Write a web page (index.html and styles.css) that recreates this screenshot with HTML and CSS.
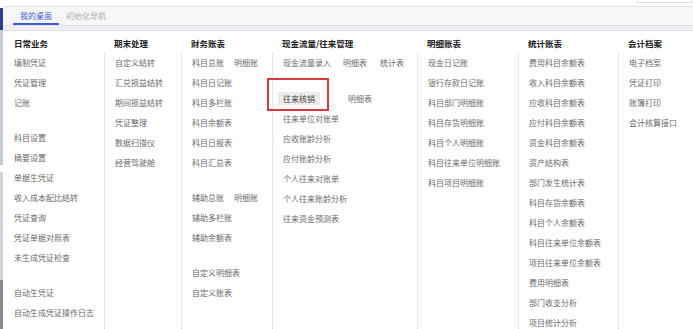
FILE: index.html
```html
<!DOCTYPE html>
<html lang="zh-CN">
<head>
    <meta charset="UTF-8">
    <meta name="viewport" content="width=device-width, initial-scale=1.0">
    <title>我的桌面</title>
    <link rel="stylesheet" href="styles.css">
</head>
<body>
    <div class="page">
        <div class="side-strip"></div>
        <div class="main">
            <div class="topline"><span class="top-box"></span></div>
            <div class="tabs">
                <a class="tab active">我的桌面</a>
                <a class="tab">初始化导航</a>
            </div>
            <div class="tabs-shadow"></div>

            <div class="menu">
                <div class="col col-daily">
                    <h3>日常业务</h3>
                    <div class="col-body">
                        <ul class="group">
                            <li>填制凭证</li>
                            <li>凭证管理</li>
                            <li>记账</li>
                        </ul>
                        <ul class="group">
                            <li>科目设置</li>
                            <li>摘要设置</li>
                            <li>单据生凭证</li>
                            <li>收入成本配比结转</li>
                            <li>凭证查询</li>
                            <li>凭证单据对照表</li>
                            <li>未生成凭证检查</li>
                        </ul>
                        <ul class="group">
                            <li>自动生凭证</li>
                            <li>自动生成凭证操作日志</li>
                        </ul>
                    </div>
                </div>

                <div class="col col-period">
                    <h3>期末处理</h3>
                    <div class="col-body">
                        <ul class="group">
                            <li>自定义结转</li>
                            <li>汇兑损益结转</li>
                            <li>期间损益结转</li>
                            <li>凭证整理</li>
                            <li>数据扫描仪</li>
                            <li>经营驾驶舱</li>
                        </ul>
                    </div>
                </div>

                <div class="col col-books">
                    <h3>财务账表</h3>
                    <div class="col-body">
                        <ul class="group">
                            <li class="pair"><span>科目总账</span><span>明细账</span></li>
                            <li>科目日记账</li>
                            <li>科目多栏账</li>
                            <li>科目余额表</li>
                            <li>科目日报表</li>
                            <li>科目汇总表</li>
                        </ul>
                        <ul class="group">
                            <li class="pair"><span>辅助总账</span><span>明细账</span></li>
                            <li>辅助多栏账</li>
                            <li>辅助余额表</li>
                        </ul>
                        <ul class="group">
                            <li>自定义明细表</li>
                            <li>自定义账表</li>
                        </ul>
                    </div>
                </div>

                <div class="col col-cash">
                    <h3>现金流量/往来管理</h3>
                    <div class="col-body">
                        <ul class="group">
                            <li class="triple"><span>现金流量录入</span><span>明细表</span><span>统计表</span></li>
                        </ul>
                        <ul class="group">
                            <li class="pair-wide"><span class="hl">往来核销</span><span>明细表</span></li>
                            <li>往来单位对账单</li>
                            <li>应收账龄分析</li>
                            <li>应付账龄分析</li>
                            <li>个人往来对账单</li>
                            <li>个人往来账龄分析</li>
                            <li>往来资金预测表</li>
                        </ul>
                        <div class="mark-box"></div>
                    </div>
                </div>

                <div class="col col-detail">
                    <h3>明细账表</h3>
                    <div class="col-body">
                        <ul class="group">
                            <li>现金日记账</li>
                            <li>银行存款日记账</li>
                            <li>科目部门明细账</li>
                            <li>科目存货明细账</li>
                            <li>科目个人明细账</li>
                            <li>科目往来单位明细账</li>
                            <li>科目项目明细账</li>
                        </ul>
                    </div>
                </div>

                <div class="col col-stats">
                    <h3>统计账表</h3>
                    <div class="col-body">
                        <ul class="group">
                            <li>费用科目余额表</li>
                            <li>收入科目余额表</li>
                            <li>应收科目余额表</li>
                            <li>应付科目余额表</li>
                            <li>资金科目余额表</li>
                            <li>资产结构表</li>
                            <li>部门发生统计表</li>
                            <li>科目存货余额表</li>
                            <li>科目个人余额表</li>
                            <li>科目往来单位余额表</li>
                            <li>项目往来单位余额表</li>
                            <li>费用明细表</li>
                            <li>部门收支分析</li>
                            <li>项目统计分析</li>
                        </ul>
                    </div>
                </div>

                <div class="col col-archive">
                    <h3>会计档案</h3>
                    <div class="col-body">
                        <ul class="group">
                            <li>电子档案</li>
                            <li>凭证打印</li>
                            <li>账簿打印</li>
                            <li>会计核算接口</li>
                        </ul>
                    </div>
                </div>
            </div>
        </div>
    </div>
</body>
</html>
```

FILE: styles.css
```css
body {
    margin: 0;
    padding: 0;
    background: #ffffff;
    font-family: "Noto Sans CJK SC", "Noto Sans", sans-serif;
    overflow: hidden;
}
.page {
    display: flex;
    height: 329px;
}
.side-strip {
    width: 3px;
    flex-shrink: 0;
    background: linear-gradient(to bottom, #ffffff 0, #ffffff 8px, #2d3c96 8px, #2d3c96 30px, #c9cad8 30px, #c9cad8 165px, #ffffff 165px, #ffffff 172px, #d4d4dc 172px, #d4d4dc 280px, #8a8a90 280px);
}
.main {
    flex: 1;
    position: relative;
}
.topline {
    height: 6px;
    border-bottom: 1px solid #e4e4e6;
    position: relative;
}
.top-box {
    position: absolute;
    right: 0;
    top: 0;
    width: 54px;
    height: 2px;
    border: 1px solid #dcdcdc;
    border-top: none;
}
.tabs {
    height: 18px;
    background: #f7f7f8;
    border-bottom: 1px solid #e2e3e6;
    display: flex;
    padding-left: 10px;
}
.tabs-shadow {
    height: 4px;
    background: #eef0f3;
    border-bottom: 1px solid #e0e2e6;
}
.tab {
    font-size: 8px;
    line-height: 18px;
    padding: 0 7px;
    color: #b0b0b0;
}
.tab.active {
    color: #3c5bd6;
    box-shadow: inset 0 -2px 0 #3c5bd6;
}
.menu {
    display: flex;
    padding-left: 11px;
}
.col h3 {
    margin: 3px 0 0 0;
    font-size: 8.5px;
    line-height: 19px;
    font-weight: bold;
    color: #222;
    white-space: nowrap;
}
.col-body {
    position: relative;
    height: 276px;
}
.col + .col .col-body {
    border-left: 1px dotted #d4d4d4;
    margin-left: -10px;
    padding-left: 10px;
}
.col-daily { width: 100px; }
.col-period { width: 77px; }
.col-books { width: 91px; }
.col-cash { width: 145px; }
.col-detail { width: 101px; }
.col-stats { width: 100px; }
.col-archive { width: 60px; }
.group {
    list-style: none;
    margin: 0 0 15px 0;
    padding: 0;
}
.group li {
    font-size: 8px;
    line-height: 20px;
    color: #6a6a6a;
    white-space: nowrap;
}
.pair span:first-child {
    display: inline-block;
    width: 42px;
}
.triple span:nth-child(1) {
    display: inline-block;
    width: 60px;
}
.triple span:nth-child(2) {
    display: inline-block;
    width: 37px;
}
.pair-wide {
    padding-top: 1px;
}
.pair-wide .hl {
    display: inline-block;
    line-height: 13px;
    padding: 0 5px;
    margin-left: -5px;
    margin-right: 28px;
    background: #ececec;
    color: #444;
}
.mark-box {
    position: absolute;
    left: -6px;
    top: 25px;
    width: 58px;
    height: 29px;
    border: 2px solid #d9383f;
}
```
